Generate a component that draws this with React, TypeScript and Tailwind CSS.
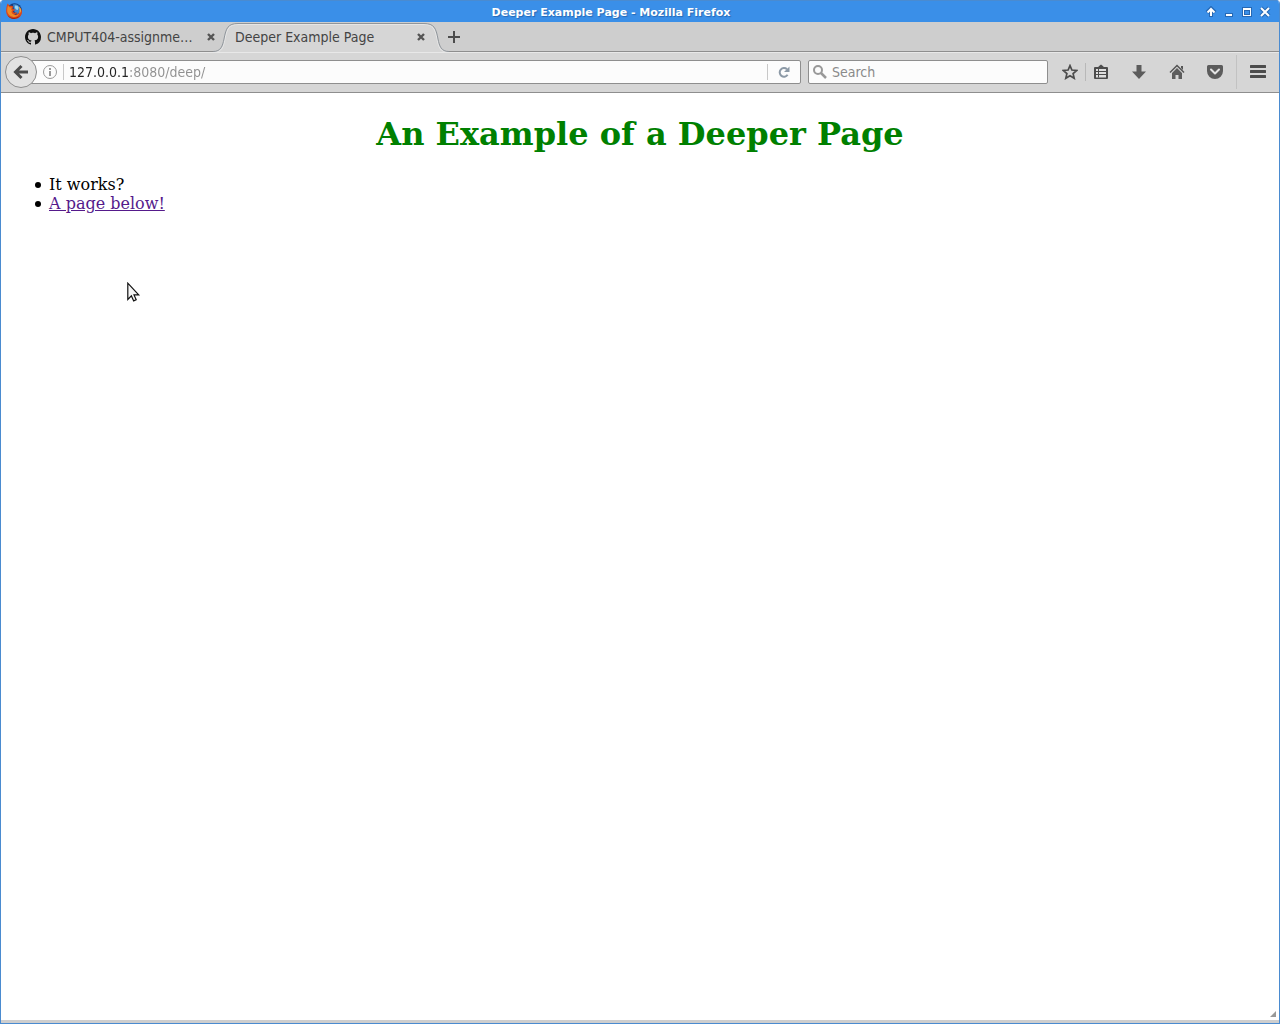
import type { ReactNode } from "react";

const GITHUB_MARK =
  "M8 0C3.58 0 0 3.58 0 8c0 3.54 2.29 6.53 5.47 7.59.4.07.55-.17.55-.38 0-.19-.01-.82-.01-1.49-2.01.37-2.53-.49-2.69-.94-.09-.23-.48-.94-.82-1.13-.28-.15-.68-.52-.01-.53.63-.01 1.08.58 1.23.82.72 1.21 1.87.87 2.33.66.07-.52.28-.87.51-1.07-1.78-.2-3.64-.89-3.64-3.95 0-.87.31-1.59.82-2.15-.08-.2-.36-1.02.08-2.12 0 0 .67-.21 2.2.82.64-.18 1.32-.27 2-.27s1.36.09 2 .27c1.53-1.04 2.2-.82 2.2-.82.44 1.1.16 1.92.08 2.12.51.56.82 1.27.82 2.15 0 3.07-1.87 3.75-3.65 3.95.29.25.54.73.54 1.48 0 1.07-.01 1.93-.01 2.2 0 .21.15.46.55.38A8.01 8.01 0 0 0 16 8c0-4.42-3.58-8-8-8z";

function FirefoxLogo() {
  return (
    <svg className="size-4 shrink-0" viewBox="0 0 16 16" aria-hidden="true">
      <circle cx="8.5" cy="7.5" r="7.3" fill="#173f80" />
      <path d="M7 1.500c3.500-1 6 .8 6.800 3.200.7 2.300 0 5-2.300 6.300L8.500 9z" fill="#3c86cc" />
      <path d="M9 2.500l2.400.2 1.300 2-1 2.300-1.700-.5-1.300-2z" fill="#9bd4ee" />
      <path
        d="M1.600.4C2.500 1.200 3.200 2.200 3.800 3 5.400 2.500 6.600 3 7.500 3.800c-.6.600-1 1.200-.9 1.900l2.400.8c-.1 1-1.200 1.300-2 1.700.2 1.200 1.100 1.700 2.500 1.400.7-.1 1.100-.3 1.900 0-.7 1.300-2 1.800-3.400 1.700 2.300 1 5-.3 5.500-3.200.2-1.500.1-3-.6-4.300 1.500.8 2.600 2.400 3 4.200.6 4.500-3 7.900-7.700 7.900C3.600 15.900.1 12.400.1 8.200.1 5.300.6 2.500 1.600.4z"
        fill="#d9481c"
      />
      <path
        d="M2 2.500l1.400 1.700 2.600.3-1 1.700 1.500 1c-1.500.5-1.200 2.500.3 3.900 2 1.800 4.900 1.400 6.300-.6-.4 2.500-2.900 3.800-5.700 3.500C3.900 13.500 1.200 10.800 1.200 7.600 1.200 5.600 1.500 4 2 2.500z"
        fill="#f08a24"
      />
      <path d="M13.200 3.500c1.500 1.500 1.900 3.600 1.300 5.600l-1.100 2c.4-2.200.5-4.900-.2-7.600z" fill="#f9d04a" />
      <path d="M1.500 12.500c3.300 3.200 9.400 3.300 13-.2-1.400 2.300-3.700 3.600-6.500 3.600-2.700 0-5.100-1.300-6.500-3.400z" fill="#9c2412" />
    </svg>
  );
}

function CloseGlyph() {
  return (
    <svg className="size-2" viewBox="0 0 8 8" aria-hidden="true">
      <path d="M1 1l6 6M7 1L1 7" stroke="#555" strokeWidth="2.400" />
    </svg>
  );
}

function WindowButton({ label, children }: { label: string; children: ReactNode }) {
  return (
    <button type="button" aria-label={label} className="flex h-full w-[18px] items-center justify-center">
      <svg className="size-3" viewBox="0 0 12 12" fill="none" aria-hidden="true">
        {children}
      </svg>
    </button>
  );
}

function TitleBar() {
  return (
    <header className="flex h-[22px] shrink-0 items-stretch border-t border-[#4a8bd0] bg-[#3a8fe8] px-[5px]">
      <div className="w-[14px] pt-[2px]">
        <FirefoxLogo />
      </div>
      <div className="flex-1 pt-[2px] text-center font-['DejaVu_Sans',sans-serif] text-[11px] leading-[19px] font-bold text-white [text-shadow:1px_1px_1px_#2668b4]">
        Deeper Example Page - Mozilla Firefox
      </div>
      <div className="flex h-full pt-px">
        <WindowButton label="Shade">
          <path d="M6 11V3M2 6.500L6 2.500l4 4" stroke="#2668b4" strokeWidth="4" />
          <path d="M6 10V3M2.500 6.500L6 3l3.500 3.500" stroke="#fff" strokeWidth="2" />
        </WindowButton>
        <WindowButton label="Minimize">
          <path d="M2 7h8v4H2z" fill="#2668b4" />
          <path d="M3 8h6v2H3z" fill="#fff" />
        </WindowButton>
        <WindowButton label="Maximize">
          <path d="M1 1h10v10H1z" fill="#2668b4" />
          <path d="M2 2h8v8H2z" fill="#fff" />
          <path d="M3 4h6v5H3z" fill="#2668b4" />
          <path d="M4 5h4v3H4z" fill="#3a8fe8" />
        </WindowButton>
        <WindowButton label="Close">
          <path d="M2 2l8 8M10 2l-8 8" stroke="#2668b4" strokeWidth="4" />
          <path d="M2 2l8 8M10 2l-8 8" stroke="#fff" strokeWidth="2" />
        </WindowButton>
      </div>
    </header>
  );
}

function TabStrip() {
  return (
    <nav aria-label="Tabs" className="flex h-[30px] shrink-0 items-stretch border-b border-[#8e8e8e] bg-[#cecece] text-[#444]">
      <div className="flex w-[218px] items-center pt-px pl-6">
        <button type="button" className="flex min-w-0 flex-1 items-center gap-[6px] text-left">
          <svg className="size-4 shrink-0" viewBox="0 0 16 16" fill="#111" aria-hidden="true">
            <path d={GITHUB_MARK} />
          </svg>
          <span className="whitespace-nowrap">CMPUT404-assignme…</span>
        </button>
        <button type="button" aria-label="Close CMPUT404 tab" className="flex size-4 shrink-0 items-center justify-center">
          <CloseGlyph />
        </button>
      </div>
      <div className="relative -mb-px -ml-[6px] flex w-[236px] items-center pr-5 pl-[22px]">
        <svg className="absolute inset-0" width="236" height="30" viewBox="0 0 236 30" fill="none" aria-hidden="true">
          <path
            d="M0 30V29.500C8 29.500 9.500 24 11 17C13 6 15 1.500 25 1.500H211C221 1.500 223 6 225 17C226.500 24 228 29.500 236 29.500V30Z"
            fill="#d6d6d6"
          />
          <path
            d="M0 30.500C9 30.500 10.500 25 12 17C14 7 16 2.500 25 2.500H211C220 2.500 222 7 224 17C225.500 25 227 30.500 236 30.500"
            stroke="#e6e6e6"
          />
          <path
            d="M0 29.500C8 29.500 9.500 24 11 17C13 6 15 1.500 25 1.500H211C221 1.500 223 6 225 17C226.500 24 228 29.500 236 29.500"
            stroke="#8f959b"
          />
        </svg>
        <button type="button" aria-current="page" className="relative flex-1 text-left whitespace-nowrap">
          Deeper Example Page
        </button>
        <button type="button" aria-label="Close Deeper Example Page" className="relative flex size-4 items-center justify-center">
          <CloseGlyph />
        </button>
      </div>
      <button type="button" aria-label="New tab" className="flex w-[10px] items-center justify-center pt-px">
        <svg className="size-3 shrink-0" viewBox="0 0 12 12" aria-hidden="true">
          <path d="M5 0h2v5h5v2H7v5H5V7H0V5h5z" fill="#4c4c4c" />
        </svg>
      </button>
    </nav>
  );
}

function ToolButton({ label, width, children }: { label: string; width: string; children: ReactNode }) {
  return (
    <button type="button" aria-label={label} className={`flex h-8 shrink-0 items-center justify-center ${width}`}>
      <svg className="size-4" viewBox="0 0 16 16" fill="none" aria-hidden="true">
        {children}
      </svg>
    </button>
  );
}

function Toolbar() {
  return (
    <div className="flex h-[41px] shrink-0 items-center border-t border-b border-t-[#e8e8e8] border-b-[#8e8e8e] bg-[#d6d6d6] pb-[2px] pl-1">
      <button
        type="button"
        aria-label="Back"
        className="relative z-10 flex size-8 shrink-0 items-center justify-center rounded-full border border-[#8e8e8e] bg-[#e2e2e2]"
      >
        <svg className="size-4" viewBox="0 0 16 16" fill="none" aria-hidden="true">
          <path d="M8.500 2L2.500 8l6 6M3 8h12" stroke="#4c4c4c" strokeWidth="3" />
        </svg>
      </button>
      <div className="-ml-4 flex h-6 flex-1 items-center rounded-[2px] border border-[#8e8e8e] bg-[#fcfcfc] pl-5">
        <svg className="size-4 shrink-0" viewBox="0 0 16 16" fill="none" aria-hidden="true">
          <circle cx="8" cy="8" r="6.500" stroke="#999" />
          <path d="M7 4h2v2H7zM7 7h2v5H7z" fill="#999" />
        </svg>
        <div className="ml-[5px] h-4 w-px bg-[#c8c8c8]" />
        <input
          aria-label="Address"
          defaultValue="127.0.0.1:8080/deep/"
          className="ml-[5px] h-full min-w-0 flex-1 bg-[linear-gradient(90deg,#222_60px,#8f8f8f_60px)] bg-clip-text text-transparent caret-black outline-none"
        />
        <div className="h-4 w-px bg-[#c8c8c8]" />
        <button type="button" aria-label="Reload" className="flex h-full w-8 items-center justify-center">
          <svg className="size-3" viewBox="0 0 12 12" fill="none" aria-hidden="true">
            <path d="M9 3.300A4.300 4.300 0 1 0 9.600 8.800" stroke="#8c99a6" strokeWidth="2" />
            <path d="M11.500.5V6H6z" fill="#8c99a6" />
          </svg>
        </button>
      </div>
      <div className="ml-[7px] flex h-6 w-[240px] items-center rounded-[2px] border border-[#8e8e8e] bg-[#fcfcfc] pl-1">
        <svg className="size-[14px] shrink-0" viewBox="0 0 14 14" fill="none" aria-hidden="true">
          <circle cx="5" cy="5" r="4" stroke="#999" strokeWidth="2" />
          <path d="M8 8l5 5" stroke="#999" strokeWidth="2.500" />
        </svg>
        <input
          aria-label="Search"
          placeholder="Search"
          className="ml-[5px] h-full min-w-0 flex-1 text-[#222] outline-none placeholder:text-[#8a8a8a]"
        />
      </div>
      <div className="ml-[7px] flex items-center">
        <ToolButton label="Bookmark this page" width="w-[30px]">
          <path
            d="M8 1.600l1.900 4.400 4.800.4-3.600 3.200 1.100 4.700L8 11.800l-4.200 2.500 1.100-4.700L1.300 6.400 6.100 6z"
            stroke="#4c4c4c"
            strokeWidth="1.700"
          />
        </ToolButton>
        <div className="h-[18px] w-px bg-[#b8b8b8]" />
        <ToolButton label="Show bookmarks" width="w-[30px]">
          <path d="M5.500 3V2.500L8 .5l2.500 2V3H14a1 1 0 0 1 1 1v10a1 1 0 0 1-1 1H2a1 1 0 0 1-1-1V4a1 1 0 0 1 1-1z" fill="#4c4c4c" />
          <path d="M3 5h10v8.500H3z" fill="#dedede" />
          <path d="M3 7.500h10M3 10.500h10M5.500 5v8.500" stroke="#4c4c4c" />
        </ToolButton>
        <div className="w-1" />
        <ToolButton label="Downloads" width="w-[38px]">
          <path d="M5.500 1h5v6.500H15L8 15 1 7.500h4.500z" fill="#5c5c5c" />
        </ToolButton>
        <ToolButton label="Home" width="w-[38px]">
          <path d="M1 8.500l7-7 7 7" stroke="#555" strokeWidth="1.500" />
          <path d="M12 2h2v4l-2-2z" fill="#555" />
          <path d="M8 4l5 5v6H9.500v-4h-3v4H3V9z" fill="#5c5c5c" />
        </ToolButton>
        <ToolButton label="Save to Pocket" width="w-[38px]">
          <path d="M1.500 1h13A1.500 1.500 0 0 1 16 2.500V7A8 8 0 0 1 0 7V2.500A1.500 1.500 0 0 1 1.500 1z" fill="#5c5c5c" />
          <path d="M4 5.500l4 4 4-4" stroke="#e4e4e4" strokeWidth="2" strokeLinecap="round" strokeLinejoin="round" />
        </ToolButton>
        <div className="ml-[2px] h-[34px] w-px bg-[#c2c2c2]" />
        <ToolButton label="Open menu" width="w-[42px]">
          <path d="M1 2.500h14M1 7.500h14M1 12.500h14" stroke="#4c4c4c" strokeWidth="3" strokeLinecap="round" />
        </ToolButton>
      </div>
    </div>
  );
}

const BULLET =
  "flex items-center before:mr-2 before:size-[6px] before:rounded-full before:bg-black before:content-['']";

export default function App() {
  return (
    <div className="relative flex min-h-screen flex-col overflow-hidden rounded-t-[4px] border-x border-b border-[#4a8bd0] bg-white font-['DejaVu_Sans_Condensed','DejaVu_Sans',sans-serif] text-[14px]">
      <TitleBar />
      <TabStrip />
      <Toolbar />
      <main className="flex-1 px-2 font-['DejaVu_Serif',serif] text-[16px] leading-[19px] text-black">
        <h1 className="mt-[22px] text-center text-[32px] leading-[38px] font-bold text-[#008000]">
          An Example of a Deeper Page
        </h1>
        <ul className="mt-[22px] pl-[26px]">
          <li className={BULLET}>It works?</li>
          <li className={BULLET}>
            <a href="#deeper" className="text-[#551a8b] underline">
              A page below!
            </a>
          </li>
        </ul>
      </main>
      <div className="flex justify-end pr-[3px] pb-[3px]">
        <svg className="size-[6px]" viewBox="0 0 6 6" aria-hidden="true">
          <path d="M6 0v6H0z" fill="#999" />
        </svg>
      </div>
      <footer className="h-[3px] shrink-0 bg-[#cecece]" />
      <svg className="pointer-events-none absolute top-[282px] left-[126px] h-5 w-[14px]" viewBox="0 0 14 20" aria-hidden="true">
        <path
          d="M.8 1.200v16.300l3.600-3.600 2.300 5 2.500-1.100-2.200-4.900h4.700z"
          fill="#f6f6f6"
          stroke="#111"
          strokeWidth="1.200"
        />
      </svg>
    </div>
  );
}
